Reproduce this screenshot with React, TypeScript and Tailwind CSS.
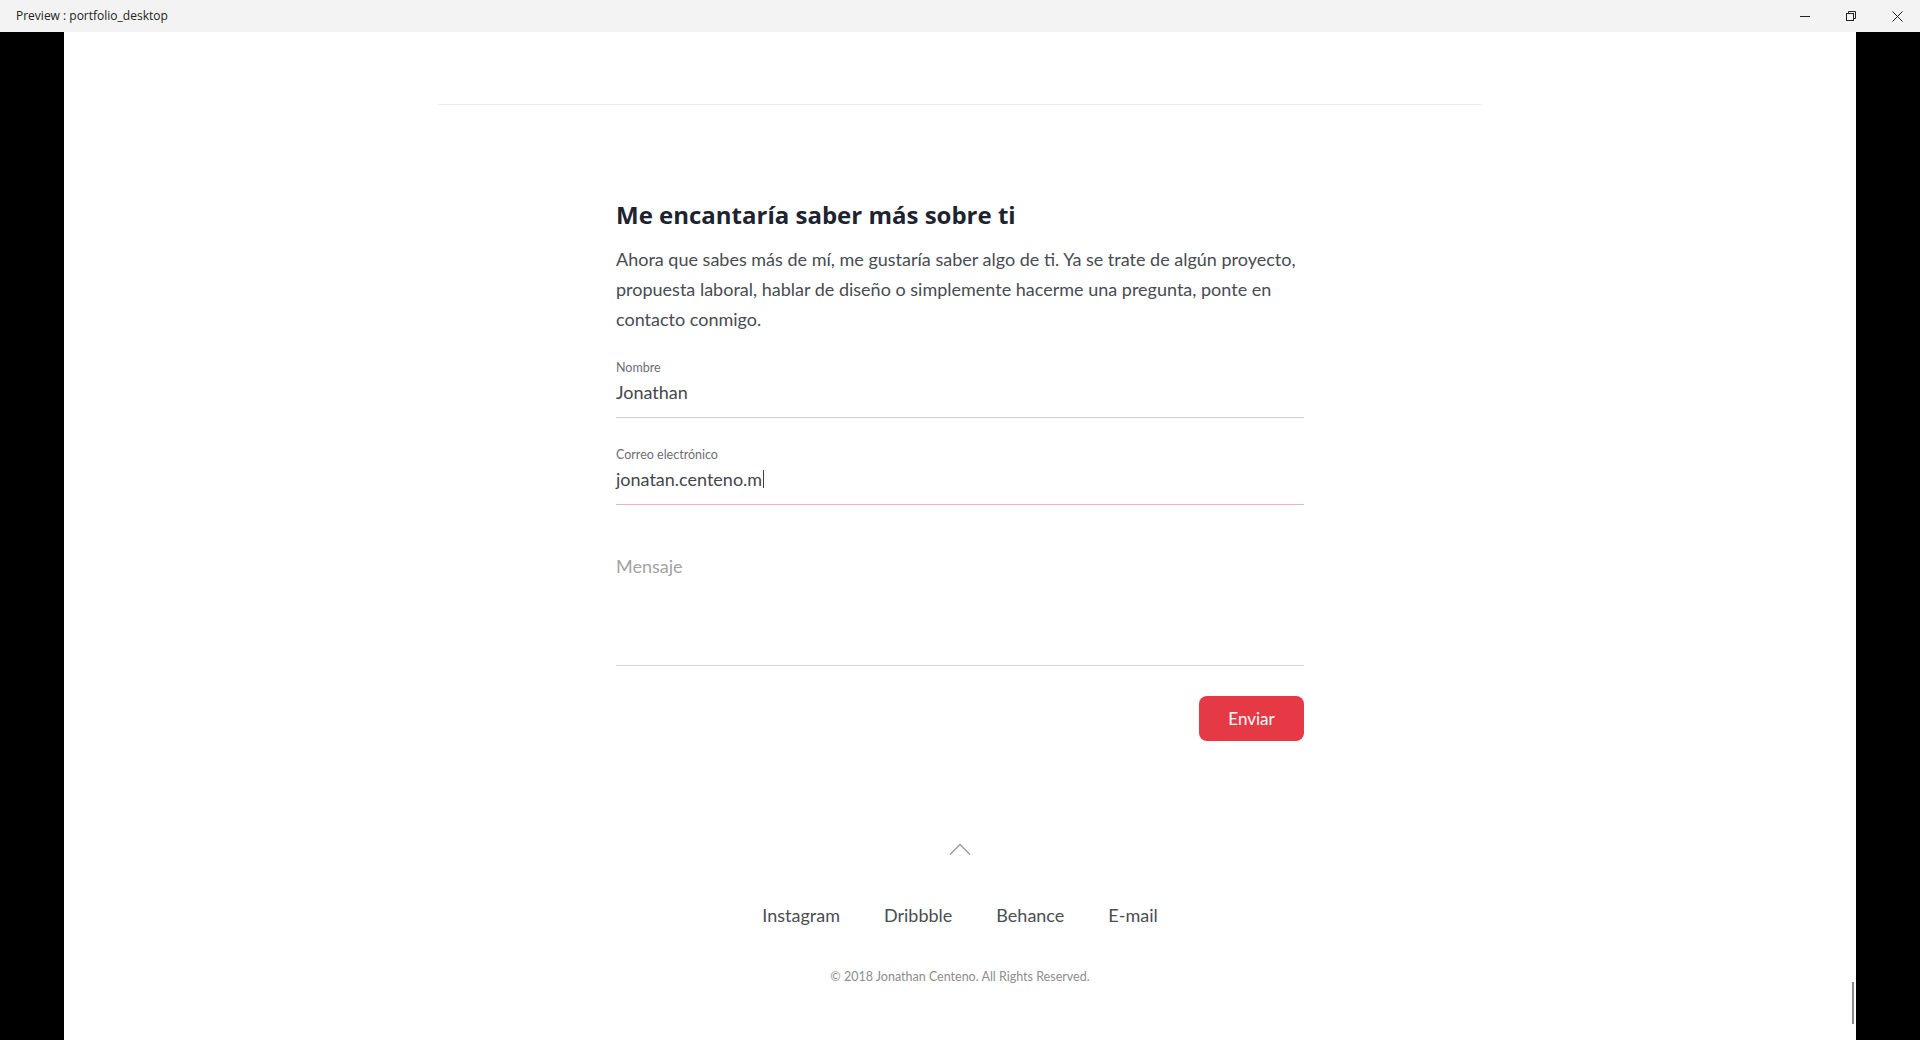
const body = "font-['Lato','Open_Sans',sans-serif]";

function TitleBar() {
  return (
    <div className="h-8 bg-[#f3f3f3] flex items-center justify-between shrink-0">
      <span className="pl-4 text-[12px] text-[#222] font-['Open_Sans','Liberation_Sans',sans-serif]">
        Preview : portfolio_desktop
      </span>
      <div className="flex items-center h-full text-[#222]">
        <div className="w-[46px] h-full flex items-center justify-center">
          <svg width="10" height="10" viewBox="0 0 10 10">
            <path d="M0 5.5h10" stroke="currentColor" strokeWidth="1" />
          </svg>
        </div>
        <div className="w-[46px] h-full flex items-center justify-center">
          <svg width="10" height="10" viewBox="0 0 10 10" fill="none" stroke="currentColor" strokeWidth="1">
            <rect x="0.5" y="2.5" width="7" height="7" />
            <path d="M2.5 2.5V0.5h7v7h-2" />
          </svg>
        </div>
        <div className="w-[46px] h-full flex items-center justify-center">
          <svg width="11" height="11" viewBox="0 0 11 11" fill="none" stroke="currentColor" strokeWidth="1">
            <path d="M0.5 0.5l10 10M10.5 0.5l-10 10" />
          </svg>
        </div>
      </div>
    </div>
  );
}

function Field({ label, value, focused }: { label: string; value: string; focused?: boolean }) {
  return (
    <div className="flex flex-col">
      <label className={`${body} text-[12.5px] leading-4 text-[#6b6e75]`}>{label}</label>
      <div
        className={`mt-[4px] pb-[13px] border-b ${focused ? "border-[#f1b3bf]" : "border-[#cfcfcf]"} ${body} text-[18px] leading-6 text-[#43464d] flex items-center`}
      >
        {value}
        {focused && <span className="ml-px w-px h-[18px] bg-[#3b3e45]" />}
      </div>
    </div>
  );
}

export default function App() {
  return (
    <div className="w-[1920px] h-[1040px] flex flex-col overflow-hidden bg-black">
      <TitleBar />
      <div className="flex-1 flex">
        <div className="w-16 bg-black" />
        <main className="relative flex-1 bg-white flex flex-col">
          <div className="mt-[72px] w-[1044px] mx-auto h-px bg-[#ebebeb]" />

          <section className="w-[688px] mx-auto flex flex-col">
            <h2 className="mt-[94px] font-['Open_Sans',sans-serif] font-bold text-[24px] leading-8 text-[#1e2330]">
              Me encantaría saber más sobre ti
            </h2>
            <p className={`mt-[13px] mb-px ${body} text-[18px] leading-[30px] text-[#484b52]`}>
              Ahora que sabes más de mí, me gustaría saber algo de ti. Ya se trate de algún proyecto, propuesta laboral,
              hablar de diseño o simplemente hacerme una pregunta, ponte en contacto conmigo.
            </p>

            <div className="mt-[25px]">
              <Field label="Nombre" value="Jonathan" />
            </div>
            <div className="mt-[29px]">
              <Field label="Correo electrónico" value="jonatan.centeno.m" focused />
            </div>

            <div className={`mt-[49px] h-[112px] border-b border-[#d4d4d4] ${body} text-[18px] leading-6 text-[#a3a3a3]`}>
              Mensaje
            </div>

            <div className="mt-[30px] flex justify-end">
              <button className={`w-[105px] h-[45px] rounded-lg bg-[#e63946] text-white text-[17px] ${body}`}>
                Enviar
              </button>
            </div>
          </section>

          <div className="mt-[102px] flex justify-center text-[#9e9e9e]">
            <svg width="22" height="12" viewBox="0 0 22 12" fill="none" stroke="currentColor" strokeWidth="1.5">
              <path d="M1 11.5L11 1.5l10 10" />
            </svg>
          </div>

          <nav className={`mt-[48px] flex justify-center gap-[44px] ${body} text-[18px] leading-6 text-[#4a4d53]`}>
            <a>Instagram</a>
            <a>Dribbble</a>
            <a>Behance</a>
            <a>E-mail</a>
          </nav>

          <p className={`mt-[41px] text-center ${body} text-[12.5px] leading-[18px] text-[#8d8d8d]`}>
            © 2018 Jonathan Centeno. All Rights Reserved.
          </p>

          <div className="absolute right-[2px] top-[950px] w-[2px] h-[42px] bg-[#8a8a8a]" />
        </main>
        <div className="w-16 bg-black" />
      </div>
    </div>
  );
}
